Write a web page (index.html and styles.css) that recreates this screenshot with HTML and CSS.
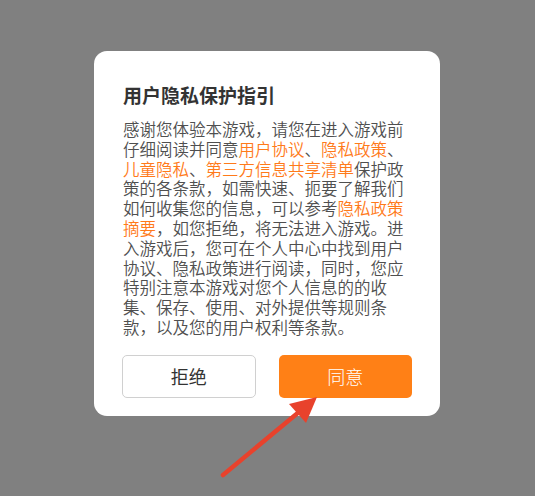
FILE: index.html
```html
<!DOCTYPE html>
<html lang="zh-CN">
<head>
<meta charset="utf-8">
<title>用户隐私保护指引</title>
<link rel="stylesheet" href="styles.css">
</head>
<body>
<div class="stage">
  <div class="dialog">
    <h1 class="title">用户隐私保护指引</h1>
    <p class="content">感谢您体验本游戏，请您在进入游戏前仔细阅读并同意<span class="link">用户协议</span>、<span class="link">隐私政策</span>、<span class="link">儿童隐私</span>、<span class="link">第三方信息共享清单</span>保护政策的各条款，如需快速、扼要了解我们如何收集您的信息，可以参考<span class="link">隐私政策摘要</span>，如您拒绝，将无法进入游戏。进入游戏后，您可在个人中心中找到用户协议、隐私政策进行阅读，同时，您应特别注意本游戏对您个人信息的的收集、保存、使用、对外提供等规则条款，以及您的用户权利等条款。</p>
    <div class="actions">
      <button class="btn btn-reject">拒绝</button>
      <button class="btn btn-agree">同意</button>
    </div>
  </div>
  <svg class="arrow" width="535" height="496" viewBox="0 0 535 496">
    <line x1="223" y1="475" x2="305" y2="407" stroke="#e8422c" stroke-width="4.5" stroke-linecap="round"/>
    <polygon points="317,397 289,404 306,423" fill="#e8422c"/>
  </svg>
</div>
</body>
</html>
```
FILE: styles.css
```css
html, body {
  margin: 0;
  padding: 0;
}
body {
  background: #808080;
  width: 535px;
  height: 496px;
  overflow: hidden;
  font-family: "Noto Sans CJK SC", "Noto Sans", sans-serif;
}
.stage {
  position: relative;
  width: 535px;
  height: 496px;
  padding-top: 51px;
  box-sizing: border-box;
}
.dialog {
  width: 346px;
  margin-left: 94px;
  background: #fff;
  border-radius: 13px;
  padding: 31px 28px 18px 29px;
  box-sizing: border-box;
}
.title {
  margin: 0;
  font-size: 19px;
  line-height: 26px;
  font-weight: 700;
  color: #333;
}
.content {
  margin: 12px 0 0 0;
  font-size: 16.5px;
  line-height: 19.8px;
  font-weight: 350;
  color: #4f4f4f;
}
.link {
  color: #ff7a1a;
}
.actions {
  display: flex;
  justify-content: space-between;
  margin-top: 17px;
  margin-left: -1px;
}
.btn {
  width: 133.5px;
  height: 43px;
  border-radius: 5px;
  font-family: "Noto Sans CJK SC", "Noto Sans", sans-serif;
  font-size: 18px;
  padding: 0;
  margin: 0;
  cursor: pointer;
}
.btn-reject {
  background: #fff;
  border: 1px solid #d0d0d0;
  color: #333;
  font-weight: 400;
}
.btn-agree {
  background: #ff8016;
  border: none;
  color: #fff;
  font-weight: 300;
}
.arrow {
  position: absolute;
  left: 0;
  top: 0;
  pointer-events: none;
}
```
